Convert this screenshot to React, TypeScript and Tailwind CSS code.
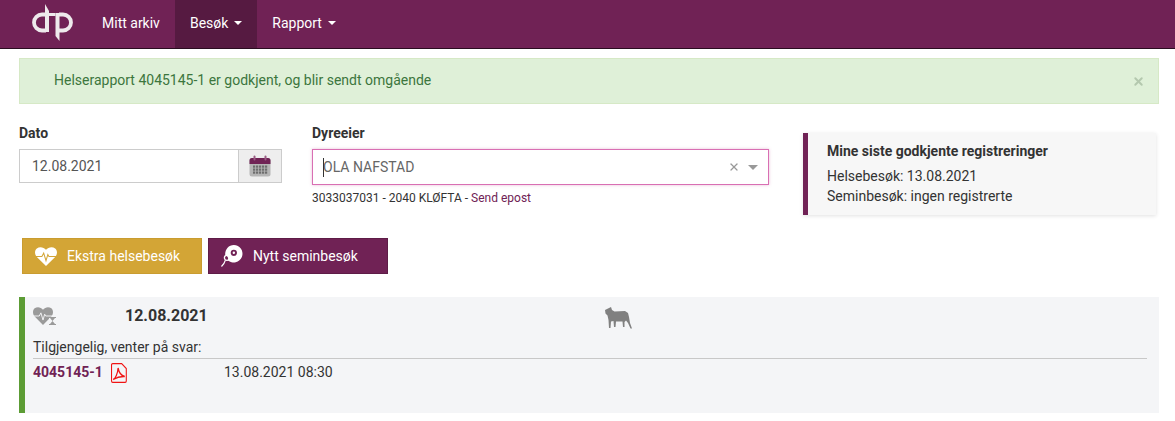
import { X } from "lucide-react";

const font = { fontFamily: "Roboto, sans-serif" };

function Logo() {
  return (
    <svg width="42" height="42" viewBox="0 0 42 42" className="text-[#eeeaec]">
      <g fill="none" stroke="currentColor" strokeWidth="3.8">
        <path d="M15 11.500h-4a8 8 0 0 0 0 16h4" />
        <path d="M28 11.500h4a8 8 0 0 1 0 16h-4" />
      </g>
      <path d="M14 1l4 7v21h-4z" fill="currentColor" />
      <path d="M18 10h6.500v3H18z" fill="currentColor" />
      <path d="M24.500 10h4v28l-4-5z" fill="currentColor" />
    </svg>
  );
}

function Caret() {
  return <span className="ml-[6px] inline-block h-0 w-0 border-x-4 border-t-4 border-x-transparent border-t-white align-middle" />;
}

function NavLink({ label, active, caret }: { label: string; active?: boolean; caret?: boolean }) {
  return (
    <a className={`flex h-full items-center px-[15px] pb-[2px] text-sm text-white ${active ? "bg-[#561a41]" : ""}`}>
      {label}
      {caret && <Caret />}
    </a>
  );
}

function CalendarIcon() {
  return (
    <svg width="22" height="22" viewBox="0 0 22 22">
      <rect x="0.5" y="3" width="21" height="18.5" rx="2.5" fill="#b5b5b5" />
      <path d="M0.5 9V5.5A2.5 2.5 0 0 1 3 3h16a2.500 2.500 0 0 1 2.500 2.500V9z" fill="#702255" />
      <rect x="4.500" y="0.500" width="2" height="5" rx="1" fill="#9a5c84" />
      <rect x="15.500" y="0.500" width="2" height="5" rx="1" fill="#9a5c84" />
      <g fill="#6d6d6d">
        {[10.500, 13.500, 16.500].map((y) =>
          [4, 7, 10, 13, 16].map((x) => <rect key={`${x}-${y}`} x={x} y={y} width="2.200" height="2.200" />)
        )}
      </g>
    </svg>
  );
}

function HeartIcon({ color, line, width, height }: { color: string; line: string; width: number; height: number }) {
  return (
    <svg width={width} height={height} viewBox="0 0 24 20" preserveAspectRatio="none">
      <path d="M12 20L2 10.500C-.8 7.500-.5 3.500 2 1.500 5 -.8 9.500 0 12 3c2.500-3 7-3.800 10-1.500 2.500 2 2.800 6 0 9z" fill={color} />
      <path d="M0 10h7.500l2-3.500 2.500 8 2-6.500 1.200 2H24" fill="none" stroke={line} strokeWidth="1.100" />
    </svg>
  );
}

function HourglassIcon() {
  return (
    <svg width="7" height="8" viewBox="0 0 7 8">
      <rect width="7" height="8" fill="#f4f5f7" />
      <path d="M0 .5h7M0 7.500h7" stroke="#9a9a9a" />
      <path d="M1 1h5L3.500 4 6 7H1l2.500-3z" fill="#9a9a9a" />
    </svg>
  );
}

function SeminIcon() {
  return (
    <svg width="22" height="24" viewBox="0 0 24 26">
      <path d="M14 1a9.500 9.500 0 1 1-6.500 16.500c1-2.500-.5-5-3-6C4.500 5.500 8.500 1 14 1z" fill="white" />
      <circle cx="14" cy="9.500" r="3.400" fill="#702255" />
      <circle cx="14" cy="9.500" r="1.300" fill="white" />
      <circle cx="6.500" cy="15" r="2.800" fill="none" stroke="white" strokeWidth="1.400" />
      <path d="M4.800 17.500C4 20.500 3 22 .5 24.500" fill="none" stroke="white" strokeWidth="1.300" />
    </svg>
  );
}

function SheepIcon() {
  return (
    <svg width="28" height="23" viewBox="0 0 28 23">
      <path
        d="M1 3L4 1.500 7 0 8 3 10.500 4.500 21 4 24 6 25 10 26 16 28 21.500 26.500 21.500 24 16 22 13.500 20.500 15 20.500 20 19 20 18.500 14.500 12 14.500 11.500 20 10 20 9.500 14 7 14.500 6.500 21 5 21 4.500 13 3.500 8.500 1.500 6.500z"
        fill="#808080"
      />
    </svg>
  );
}

function PdfIcon() {
  return (
    <svg width="16" height="20" viewBox="0 0 18 20" fill="none" stroke="#f01414" strokeWidth="1.200" preserveAspectRatio="none" className="mt-px">
      <path d="M1.500.6h10.500l5.200 5v12.500a1.300 1.300 0 0 1-1.300 1.300H1.900a1.300 1.300 0 0 1-1.300-1.300V1.900A1.300 1.300 0 0 1 1.900.6z" />
      <path d="M2.500 16.500c2.500-1 5-6 5.500-11.500.8 4 3 7.500 7.500 8.500-3.500-.2-8.500.5-13 3z" strokeWidth="1.400" />
    </svg>
  );
}

export default function App() {
  return (
    <div className="h-[421px] w-[1175px] overflow-hidden bg-white text-sm text-[#333]" style={font}>
      <nav className="flex h-[49px] items-stretch border-b border-[#2a0d20] bg-[#702255]">
        <div className="flex w-[87px] items-center pl-[31px]">
          <Logo />
        </div>
        <NavLink label="Mitt arkiv" />
        <NavLink label="Besøk" active caret />
        <NavLink label="Rapport" caret />
      </nav>

      <div className="ml-[19px] mt-[9px] flex h-[46px] w-[1140px] items-center justify-between border border-[#d6e9c6] bg-[#dff0d8] pl-[34px] pr-[13px] text-[#3c763d]">
        <span className="mb-[2px]">Helserapport 4045145-1 er godkjent, og blir sendt omgående</span>
        <X size={13} strokeWidth={3.5} className="text-[#b4c8ae]" />
      </div>

      <div className="mt-[19px] flex items-start pl-[19px]">
        <div className="w-[263px]">
          <label className="mb-[6px] block font-bold leading-[20px]">Dato</label>
          <div className="flex h-[34px]">
            <div className="flex w-[220px] items-center border border-[#ccc] pl-[12px] text-[#555]">12.08.2021</div>
            <div className="flex w-[43px] items-center justify-center border border-l-0 border-[#ccc] bg-[#eee]">
              <CalendarIcon />
            </div>
          </div>
        </div>

        <div className="ml-[30px] w-[457px]">
          <label className="mb-[6px] block font-bold leading-[20px]">Dyreeier</label>
          <div className="relative flex h-[36px] items-center justify-between border border-[#d96fb3] pl-[10px] pr-[10px] text-[#666] shadow-[0_0_3px_rgba(190,70,150,0.35)]">
            <span>OLA NAFSTAD</span>
            <span className="absolute left-[10px] top-[8px] h-[19px] w-px bg-[#333]" />
            <span className="flex items-center gap-[8px]">
              <X size={12} strokeWidth={2.500} className="text-[#999]" />
              <span className="h-0 w-0 border-x-[5px] border-t-[5px] border-x-transparent border-t-[#999]" />
            </span>
          </div>
          <div className="mt-[5px] text-xs leading-[17px]">
            3033037031 - 2040 KLØFTA - <a className="text-[#702255]">Send epost</a>
          </div>
        </div>

        <div className="ml-[34px] mt-[10px] h-[82px] w-[353px] border-l-[5px] border-[#702255] bg-[#f7f7f7] pl-[19px] pt-[8px] shadow-[0_1px_4px_rgba(0,0,0,0.12)]">
          <div className="mb-[5px] font-bold leading-[20px]">Mine siste godkjente registreringer</div>
          <div className="leading-[20px]">Helsebesøk: 13.08.2021</div>
          <div className="leading-[20px]">Seminbesøk: ingen registrerte</div>
        </div>
      </div>

      <div className="ml-[22px] mt-[23px] flex gap-[6px]">
        <button className="flex h-[36px] w-[180px] items-center gap-[10px] border border-[#c99c30] bg-[#d3a536] pl-[12px] text-white">
          <HeartIcon color="white" line="#d3a536" width={22} height={19} />
          Ekstra helsebesøk
        </button>
        <button className="flex h-[36px] w-[180px] items-center gap-[10px] border border-[#5e1c47] bg-[#702255] pl-[12px] text-white">
          <SeminIcon />
          Nytt seminbesøk
        </button>
      </div>

      <div className="ml-[19px] mt-[23px] h-[116px] w-[1140px] border-l-[6px] border-[#5c9c35] bg-[#f4f5f7] pl-[8px] pr-[12px]">
        <div className="flex h-[38px] items-center">
          <div className="relative w-[92px]">
            <HeartIcon color="#9a9a9a" line="#f4f5f7" width={20} height={18} />
            <span className="absolute left-[16px] top-[10px] flex">
              <HourglassIcon />
            </span>
          </div>
          <div className="w-[479px] text-base font-bold">12.08.2021</div>
          <div className="pt-[4px]">
            <SheepIcon />
          </div>
        </div>
        <div className="mt-[2px] border-b border-[#c8c8c8] pb-[1px] leading-[20px]">Tilgjengelig, venter på svar:</div>
        <div className="mt-[3px] flex items-start">
          <span className="w-[78px] font-bold leading-[20px] text-[#702255]">4045145-1</span>
          <PdfIcon />
          <span className="ml-[97px] leading-[20px]">13.08.2021 08:30</span>
        </div>
      </div>
    </div>
  );
}
